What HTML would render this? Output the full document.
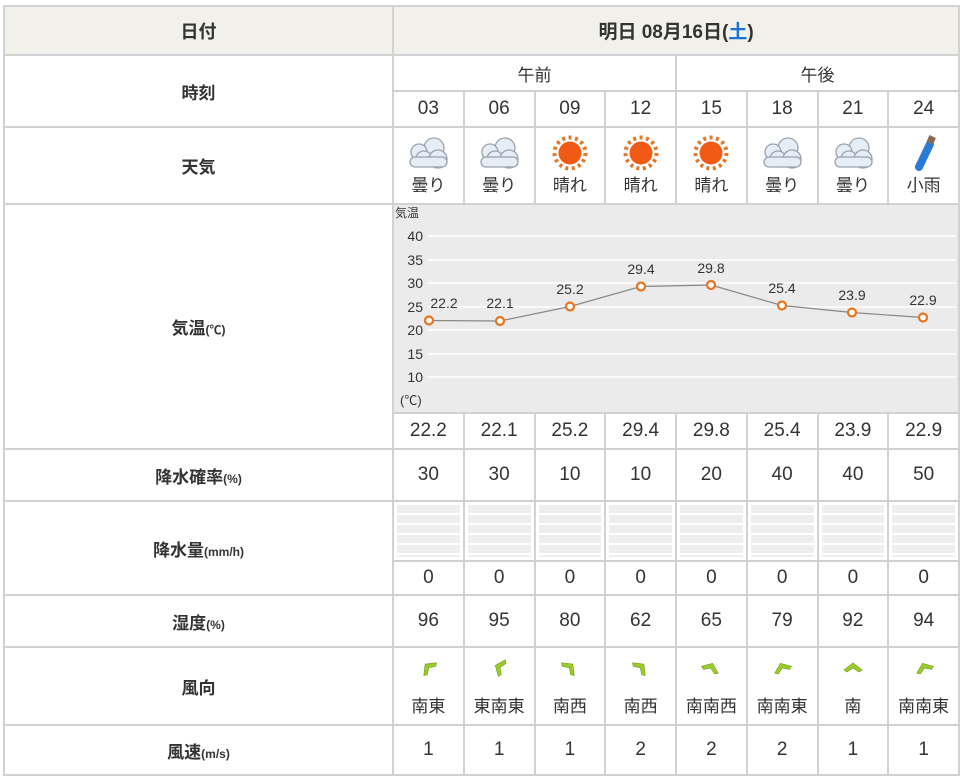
<!DOCTYPE html>
<html><head><meta charset="utf-8"><style>
body{margin:0;background:#fff;font-family:"Liberation Sans","Noto Sans CJK JP",sans-serif;color:#333;}
table{position:absolute;left:3px;top:5px;border-collapse:collapse;table-layout:fixed;width:955px;}
td{border:2px solid #d2d2d2;text-align:center;padding:0;font-size:19px;vertical-align:middle;}
td.h{font-weight:bold;font-size:17px;}
td.h small{font-size:12px;}
.bg{background:#f1f0ea;}
.ic{display:block;margin:0 auto;}
.st{height:52px;margin:2px 3px;background:repeating-linear-gradient(#eee 0 8px,#fff 8px 10px);}
.wd{font-size:17px;margin-top:14px}
</style></head><body>
<table>
<colgroup><col style="width:389px"><col span="8" style="width:70.75px"></colgroup>
<tr style="height:49px"><td class="h bg" style="font-size:18px">日付</td><td class="h bg" colspan="8" style="font-size:19px">明日 08月16日(<span style="color:#1a73d9">土</span>)</td></tr>
<tr style="height:36px"><td class="h" rowspan="2">時刻</td><td colspan="4" style="font-size:17px">午前</td><td colspan="4" style="font-size:17px">午後</td></tr>
<tr style="height:36px"><td>03</td><td>06</td><td>09</td><td>12</td><td>15</td><td>18</td><td>21</td><td>24</td></tr>
<tr style="height:77px"><td class="h">天気</td>
<td><svg class="ic" width="46" height="36" viewBox="0 0 46 36"><g fill="#e6edf4" stroke="#97a3b0" stroke-width="1.3"><circle cx="29" cy="13" r="10"/><circle cx="14" cy="17" r="8"/><circle cx="19" cy="24" r="8"/><circle cx="33" cy="24" r="9"/><rect x="5" y="22" width="37" height="10" rx="5"/></g></svg><div style="font-size:17px">曇り</div></td>
<td><svg class="ic" width="46" height="36" viewBox="0 0 46 36"><g fill="#e6edf4" stroke="#97a3b0" stroke-width="1.3"><circle cx="29" cy="13" r="10"/><circle cx="14" cy="17" r="8"/><circle cx="19" cy="24" r="8"/><circle cx="33" cy="24" r="9"/><rect x="5" y="22" width="37" height="10" rx="5"/></g></svg><div style="font-size:17px">曇り</div></td>
<td><svg class="ic" width="46" height="36" viewBox="0 0 46 36"><circle cx="23" cy="18" r="15.5" fill="none" stroke="#e0782a" stroke-width="4" stroke-dasharray="3 3.5"/><circle cx="23" cy="18" r="11.5" fill="#f05a14"/></svg><div style="font-size:17px">晴れ</div></td>
<td><svg class="ic" width="46" height="36" viewBox="0 0 46 36"><circle cx="23" cy="18" r="15.5" fill="none" stroke="#e0782a" stroke-width="4" stroke-dasharray="3 3.5"/><circle cx="23" cy="18" r="11.5" fill="#f05a14"/></svg><div style="font-size:17px">晴れ</div></td>
<td><svg class="ic" width="46" height="36" viewBox="0 0 46 36"><circle cx="23" cy="18" r="15.5" fill="none" stroke="#e0782a" stroke-width="4" stroke-dasharray="3 3.5"/><circle cx="23" cy="18" r="11.5" fill="#f05a14"/></svg><div style="font-size:17px">晴れ</div></td>
<td><svg class="ic" width="46" height="36" viewBox="0 0 46 36"><g fill="#e6edf4" stroke="#97a3b0" stroke-width="1.3"><circle cx="29" cy="13" r="10"/><circle cx="14" cy="17" r="8"/><circle cx="19" cy="24" r="8"/><circle cx="33" cy="24" r="9"/><rect x="5" y="22" width="37" height="10" rx="5"/></g></svg><div style="font-size:17px">曇り</div></td>
<td><svg class="ic" width="46" height="36" viewBox="0 0 46 36"><g fill="#e6edf4" stroke="#97a3b0" stroke-width="1.3"><circle cx="29" cy="13" r="10"/><circle cx="14" cy="17" r="8"/><circle cx="19" cy="24" r="8"/><circle cx="33" cy="24" r="9"/><rect x="5" y="22" width="37" height="10" rx="5"/></g></svg><div style="font-size:17px">曇り</div></td>
<td><svg class="ic" width="46" height="36" viewBox="0 0 46 36"><line x1="18" y1="32" x2="29" y2="9" stroke="#2a7ad8" stroke-width="8" stroke-linecap="round"/><rect x="27" y="1" width="7" height="7" fill="#8a6a4a" transform="rotate(25 30 4)"/></svg><div style="font-size:17px">小雨</div></td></tr>
<tr style="height:209px"><td class="h" rowspan="2">気温<small>(℃)</small></td><td colspan="8" style="background:#ebebeb;vertical-align:top">
<svg width="566" height="207" viewBox="0 0 566 207" style="display:block;font-family:'Liberation Sans','Noto Sans CJK JP',sans-serif">
<g stroke="#fff" stroke-width="1.5"><line x1="34" x2="562" y1="31" y2="31"/><line x1="34" x2="562" y1="55" y2="55"/><line x1="34" x2="562" y1="78" y2="78"/><line x1="34" x2="562" y1="102" y2="102"/><line x1="34" x2="562" y1="125" y2="125"/><line x1="34" x2="562" y1="149" y2="149"/><line x1="34" x2="562" y1="172" y2="172"/></g>
<g font-size="14" fill="#333" text-anchor="end"><text x="29" y="36">40</text><text x="29" y="60">35</text><text x="29" y="83">30</text><text x="29" y="107">25</text><text x="29" y="130">20</text><text x="29" y="154">15</text><text x="29" y="177">10</text></g>
<text x="1" y="12" font-size="12" fill="#333">気温</text><text x="6" y="200" font-size="13" fill="#333">(℃)</text>
<polyline fill="none" stroke="#888" stroke-width="1.2" points="35,115.5 106,116 176,101.5 247,81.5 317,80 388,100.5 458,107.5 529,112.5"/>
<g fill="#fff" stroke="#e8741e" stroke-width="2.2"><circle cx="35" cy="115.5" r="4"/><circle cx="106" cy="116" r="4"/><circle cx="176" cy="101.5" r="4"/><circle cx="247" cy="81.5" r="4"/><circle cx="317" cy="80" r="4"/><circle cx="388" cy="100.5" r="4"/><circle cx="458" cy="107.5" r="4"/><circle cx="529" cy="112.5" r="4"/></g>
<g font-size="14" fill="#333" text-anchor="middle"><text x="50" y="103">22.2</text><text x="106" y="103">22.1</text><text x="176" y="89">25.2</text><text x="247" y="69">29.4</text><text x="317" y="68">29.8</text><text x="388" y="88">25.4</text><text x="458" y="95">23.9</text><text x="529" y="100">22.9</text></g>
</svg></td></tr>
<tr style="height:36px"><td>22.2</td><td>22.1</td><td>25.2</td><td>29.4</td><td>29.8</td><td>25.4</td><td>23.9</td><td>22.9</td></tr>
<tr style="height:52px"><td class="h">降水確率<small>(%)</small></td><td>30</td><td>30</td><td>10</td><td>10</td><td>20</td><td>40</td><td>40</td><td>50</td></tr>
<tr style="height:60px"><td class="h" rowspan="2">降水量<small>(mm/h)</small></td><td><div class="st"></div></td><td><div class="st"></div></td><td><div class="st"></div></td><td><div class="st"></div></td><td><div class="st"></div></td><td><div class="st"></div></td><td><div class="st"></div></td><td><div class="st"></div></td></tr>
<tr style="height:34px"><td>0</td><td>0</td><td>0</td><td>0</td><td>0</td><td>0</td><td>0</td><td>0</td></tr>
<tr style="height:52px"><td class="h">湿度<small>(%)</small></td><td>96</td><td>95</td><td>80</td><td>62</td><td>65</td><td>79</td><td>92</td><td>94</td></tr>
<tr style="height:78px"><td class="h">風向</td>
<td><svg class="ic" width="22" height="22" viewBox="-11 -11 22 22"><path d="M-9 3 L0 -4 L9 3 L6 5 L0 1 L-6 5Z" fill="#9ccc2c" stroke="#6a9a10" stroke-width=".6" transform="rotate(-45)"/></svg><div class="wd">南東</div></td>
<td><svg class="ic" width="22" height="22" viewBox="-11 -11 22 22"><path d="M-9 3 L0 -4 L9 3 L6 5 L0 1 L-6 5Z" fill="#9ccc2c" stroke="#6a9a10" stroke-width=".6" transform="rotate(-67)"/></svg><div class="wd">東南東</div></td>
<td><svg class="ic" width="22" height="22" viewBox="-11 -11 22 22"><path d="M-9 3 L0 -4 L9 3 L6 5 L0 1 L-6 5Z" fill="#9ccc2c" stroke="#6a9a10" stroke-width=".6" transform="rotate(45)"/></svg><div class="wd">南西</div></td>
<td><svg class="ic" width="22" height="22" viewBox="-11 -11 22 22"><path d="M-9 3 L0 -4 L9 3 L6 5 L0 1 L-6 5Z" fill="#9ccc2c" stroke="#6a9a10" stroke-width=".6" transform="rotate(45)"/></svg><div class="wd">南西</div></td>
<td><svg class="ic" width="22" height="22" viewBox="-11 -11 22 22"><path d="M-9 3 L0 -4 L9 3 L6 5 L0 1 L-6 5Z" fill="#9ccc2c" stroke="#6a9a10" stroke-width=".6" transform="rotate(22)"/></svg><div class="wd">南南西</div></td>
<td><svg class="ic" width="22" height="22" viewBox="-11 -11 22 22"><path d="M-9 3 L0 -4 L9 3 L6 5 L0 1 L-6 5Z" fill="#9ccc2c" stroke="#6a9a10" stroke-width=".6" transform="rotate(-22)"/></svg><div class="wd">南南東</div></td>
<td><svg class="ic" width="22" height="22" viewBox="-11 -11 22 22"><path d="M-9 3 L0 -4 L9 3 L6 5 L0 1 L-6 5Z" fill="#9ccc2c" stroke="#6a9a10" stroke-width=".6"/></svg><div class="wd">南</div></td>
<td><svg class="ic" width="22" height="22" viewBox="-11 -11 22 22"><path d="M-9 3 L0 -4 L9 3 L6 5 L0 1 L-6 5Z" fill="#9ccc2c" stroke="#6a9a10" stroke-width=".6" transform="rotate(-22)"/></svg><div class="wd">南南東</div></td></tr>
<tr style="height:50px"><td class="h">風速<small>(m/s)</small></td><td>1</td><td>1</td><td>1</td><td>2</td><td>2</td><td>2</td><td>1</td><td>1</td></tr>
</table>
</body></html>
